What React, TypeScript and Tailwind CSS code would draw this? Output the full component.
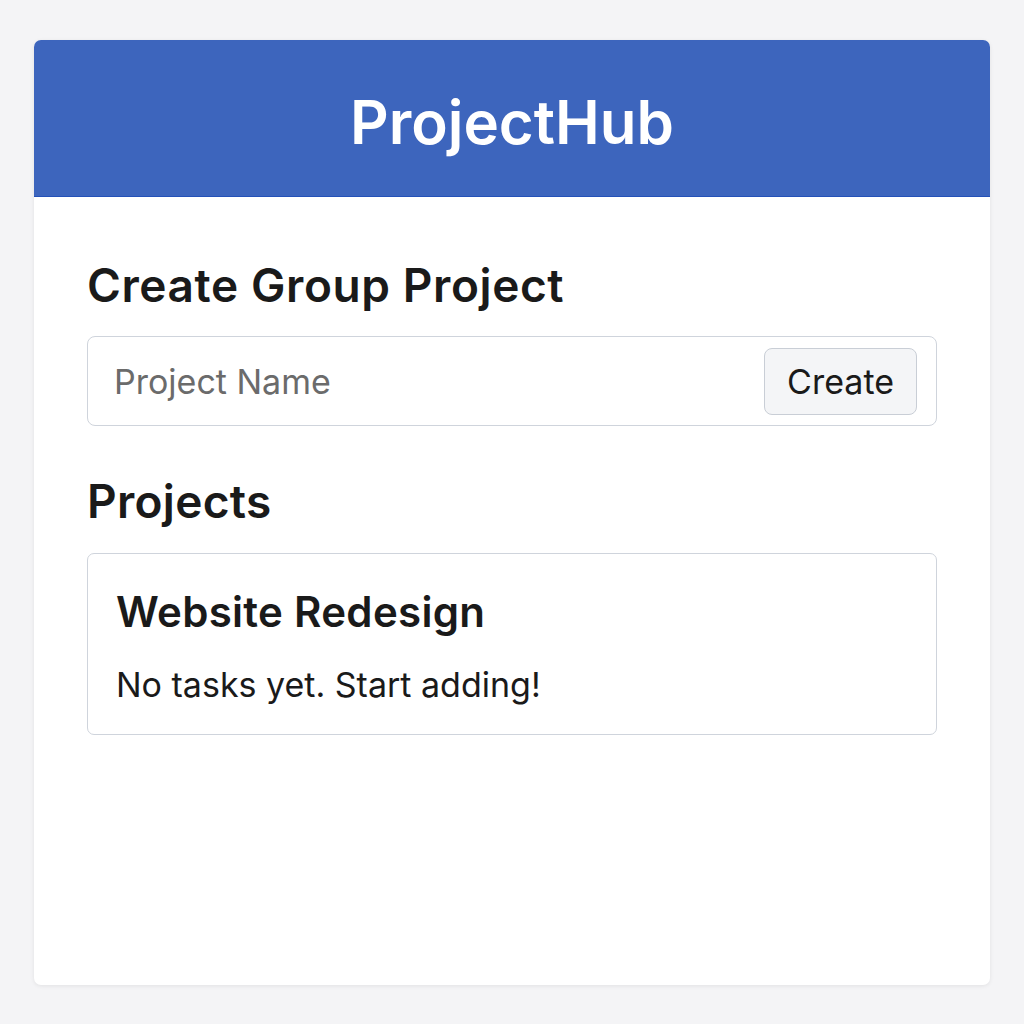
import React, { useState } from 'react';

interface Project {
  id: number;
  name: string;
  tasks: string[];
}

export default function App() {
  const [name, setName] = useState('');
  const [projects, setProjects] = useState<Project[]>([
    { id: 1, name: 'Website Redesign', tasks: [] },
  ]);

  const createProject = () => {
    if (!name.trim()) return;
    setProjects(prev => [...prev, { id: Date.now(), name: name.trim(), tasks: [] }]);
    setName('');
  };

  return (
    <div className="min-h-[1024px] bg-[#f4f4f6] pt-[40px] px-[34px] font-['Inter',sans-serif] text-[#1a1a1a]">
      <div className="w-[956px] h-[945px] bg-white rounded-[7px] shadow-[0_1px_4px_rgba(0,0,0,0.08)] overflow-hidden">
        <header className="h-[157px] bg-[#3d65bd] border-b border-[#2451b8] flex items-center justify-center pt-[8px]">
          <h1 className="text-white text-[60px] font-semibold leading-none">ProjectHub</h1>
        </header>

        <main className="px-[53px] pt-[61px]">
          <h2 className="text-[46px] font-semibold leading-[55px] tracking-[0.6px]">Create Group Project</h2>
          <div className="mt-[23px] h-[90px] flex items-center border border-[#cfd4dc] rounded-[8px] pl-[26px] pr-[19px]">
            <input
              value={name}
              onChange={e => setName(e.target.value)}
              placeholder="Project Name"
              className="flex-1 min-w-0 text-[34px] outline-none placeholder:text-[#6b6b6b] bg-transparent"
            />
            <button
              onClick={createProject}
              className="h-[67px] px-[22px] text-[34px] bg-[#f4f5f7] border border-[#c9ced6] rounded-[8px]"
            >
              Create
            </button>
          </div>

          <h2 className="mt-[48px] text-[46px] font-semibold leading-[55px] tracking-[0.3px]">Projects</h2>
          <div className="mt-[24px] flex flex-col gap-4">
            {projects.map(project => (
              <div key={project.id} className="border border-[#cfd4dc] rounded-[7px] px-[28px] pt-[33px] pb-[29px]">
                <h3 className="text-[42px] font-semibold leading-[50px] tracking-[0.3px]">{project.name}</h3>
                {project.tasks.length === 0 ? (
                  <p className="mt-[28px] text-[34px] leading-[40px]">No tasks yet. Start adding!</p>
                ) : (
                  <ul>
                    {project.tasks.map(t => (
                      <li key={t}>{t}</li>
                    ))}
                  </ul>
                )}
              </div>
            ))}
          </div>
        </main>
      </div>
    </div>
  );
}
